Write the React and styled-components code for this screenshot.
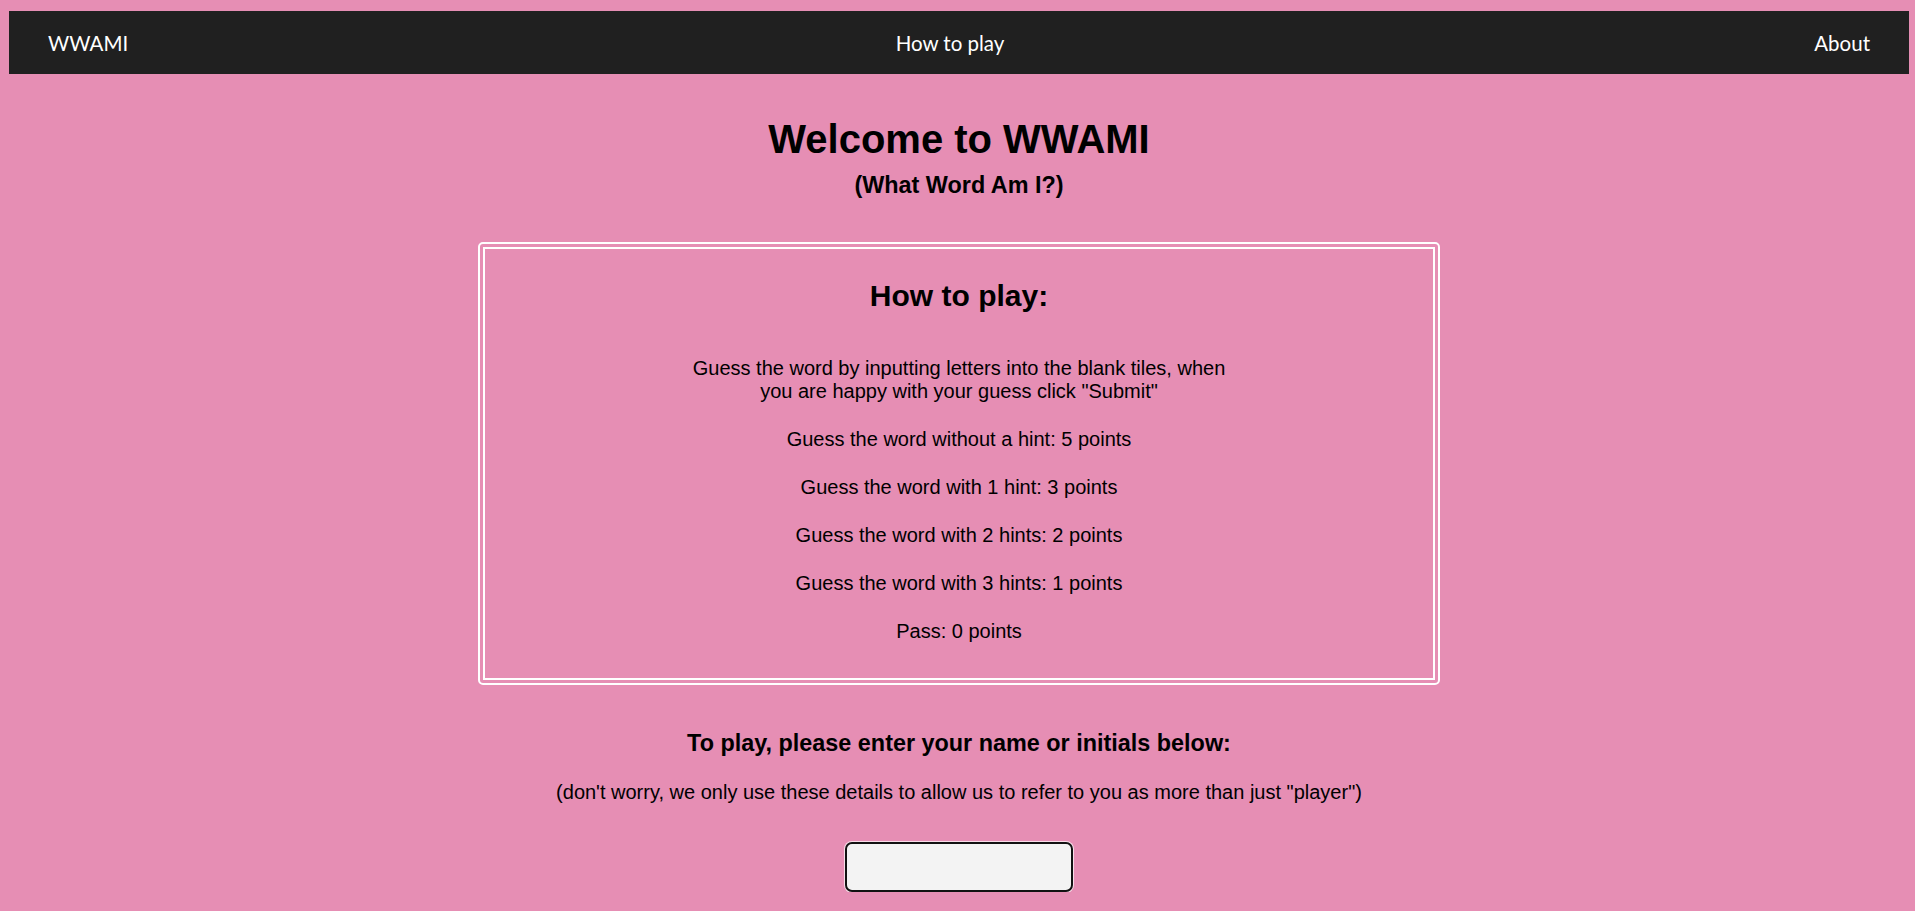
import React from 'react';

import styled, { createGlobalStyle } from 'styled-components';

const GlobalStyle = createGlobalStyle`
  body {
    margin: 0;
    background: #e68eb4;
    font-family: 'Liberation Sans', Arial, sans-serif;
    color: #000;
  }
`;

const Page = styled.div`
  padding: 11px 6px 0 9px;
`;

const NavBar = styled.nav`
  display: grid;
  grid-template-columns: 1fr auto 1fr;
  align-items: center;

  height: 63px;
  padding: 0 39px;
  background: #202020;
`;

const NavLink = styled.a`
  justify-self: ${({ $align }) => $align || 'center'};
  margin-right: ${({ $shift }) => ($shift ? `${$shift}px` : 0)};

  color: #fff;
  font-family: Lato, 'Open Sans', sans-serif;
  font-size: 20.5px;
  text-decoration: none;
  cursor: pointer;
`;

const Main = styled.main`
  text-align: center;
`;

const Title = styled.h1`
  margin: 42px 0 0;
  font-size: 40px;
  line-height: 46px;
`;

const Subtitle = styled.h3`
  margin: 10px 0 43px;
  font-size: 23.4px;
  line-height: 27px;
`;

const RulesCard = styled.section`
  box-sizing: border-box;
  width: 962px;
  margin: 0 auto;
  padding: 30px 0 35px;

  border: 7px double #fff;
  border-radius: 5px;
`;

const CardTitle = styled.h2`
  margin: 0 0 44px;
  font-size: 30px;
  line-height: 34px;
`;

const RulesList = styled.div`
  display: flex;
  flex-direction: column;
  gap: 25px;

  width: 550px;
  margin: 0 auto;
`;

const Rule = styled.p`
  margin: 0;
  font-size: 20px;
  line-height: 23px;
`;

const Prompt = styled.h3`
  margin: 45px 0 24px;
  font-size: 23.4px;
  line-height: 27px;
`;

const Note = styled.p`
  margin: 0 0 38px;
  font-size: 20px;
  line-height: 23px;
`;

const NameInput = styled.input`
  display: block;
  box-sizing: border-box;
  width: 228px;
  height: 50px;
  margin: 0 auto;

  border: 2px solid #111;
  border-radius: 7px;
  background: #f3f3f3;
  box-shadow: 0 0 0 1px rgba(255, 255, 255, 0.7);
  font-size: 20px;
  text-align: center;
`;

const rules = [
  'Guess the word by inputting letters into the blank tiles, when you are happy with your guess click "Submit"',
  'Guess the word without a hint: 5 points',
  'Guess the word with 1 hint: 3 points',
  'Guess the word with 2 hints: 2 points',
  'Guess the word with 3 hints: 1 points',
  'Pass: 0 points',
];

const App = () => (
  <Page>
    <GlobalStyle />
    <NavBar>
      <NavLink $align="start">WWAMI</NavLink>
      <NavLink $shift={18}>How to play</NavLink>
      <NavLink $align="end">About</NavLink>
    </NavBar>
    <Main>
      <Title>Welcome to WWAMI</Title>
      <Subtitle>(What Word Am I?)</Subtitle>
      <RulesCard>
        <CardTitle>How to play:</CardTitle>
        <RulesList>
          {rules.map((rule) => (
            <Rule key={rule}>{rule}</Rule>
          ))}
        </RulesList>
      </RulesCard>
      <Prompt>To play, please enter your name or initials below:</Prompt>
      <Note>
        (don't worry, we only use these details to allow us to refer to you as more than just
        "player")
      </Note>
      <NameInput type="text" />
    </Main>
  </Page>
);

export default App;
